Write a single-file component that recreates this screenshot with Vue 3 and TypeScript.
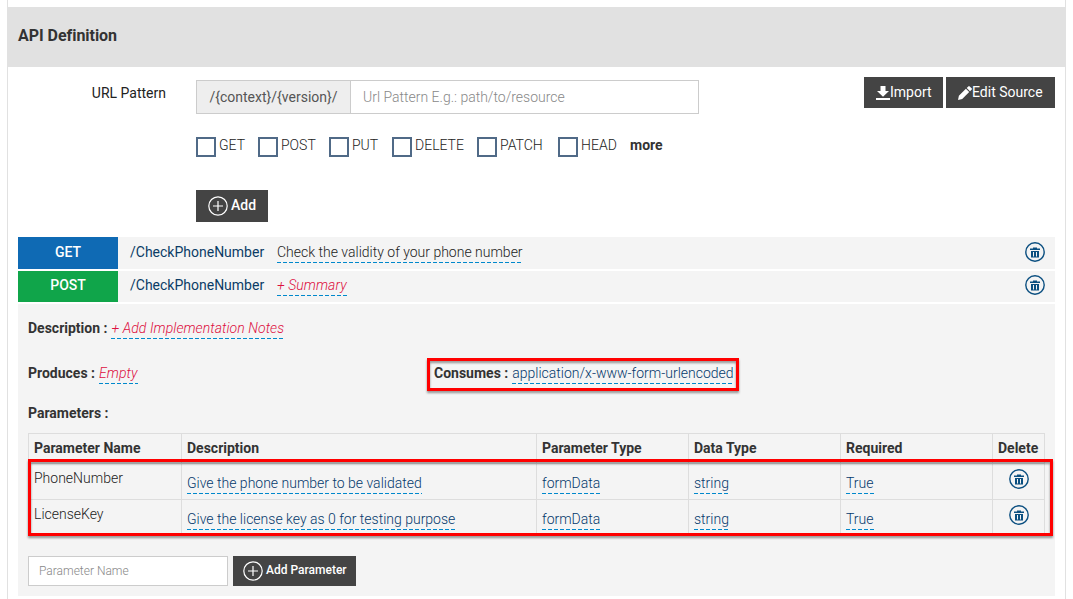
<script setup lang="ts">
const methods = ['GET', 'POST', 'PUT', 'DELETE', 'PATCH', 'HEAD']

interface Resource {
  verb: string
  path: string
  summary: string
  empty: boolean
}
const resources: Resource[] = [
  { verb: 'GET', path: '/CheckPhoneNumber', summary: 'Check the validity of your phone number', empty: false },
  { verb: 'POST', path: '/CheckPhoneNumber', summary: '+ Summary', empty: true },
]

const headings = ['Parameter Name', 'Description', 'Parameter Type', 'Data Type', 'Required', 'Delete']

interface Param {
  name: string
  values: string[]
}
const params: Param[] = [
  { name: 'PhoneNumber', values: ['Give the phone number to be validated', 'formData', 'string', 'True'] },
  { name: 'LicenseKey', values: ['Give the license key as 0 for testing purpose', 'formData', 'string', 'True'] },
]
</script>

<template>
  <main class="page">
    <section class="panel">
      <header class="panel-head">API Definition</header>

      <div class="form">
        <label class="form-label">URL Pattern</label>
        <div class="form-main">
          <div class="url-group">
            <span class="prefix">/{context}/{version}/</span>
            <input class="url-input" type="text" placeholder="Url Pattern E.g.: path/to/resource" />
          </div>
          <div class="methods">
            <label v-for="m in methods" :key="m" class="method"><span class="box"></span><span>{{ m }}</span></label>
            <b class="more">more</b>
          </div>
          <button class="btn add-btn">
            <svg class="plus" viewBox="0 0 20 20"><circle cx="10" cy="10" r="9.2" /><path d="M10 5v10M5 10h10" /></svg>
            <span>Add</span>
          </button>
        </div>
        <div class="actions">
          <button class="btn import">
            <svg class="dl" viewBox="0 0 14 14"><path d="M4.500 0h5v5h3.500L7 10.800 1 5h3.500zM0 12h14v2H0z" /></svg>
            <span>Import</span>
          </button>
          <button class="btn edit">
            <svg class="pen" viewBox="0 0 14 14"><path d="M0 14l.9-4.200L7.900 2.800l3.300 3.300-7 7zM8.700 2L10.300.4q.7-.7 1.400 0l1.900 1.900q.7.7 0 1.400L12 5.300z" /></svg>
            <span>Edit Source</span>
          </button>
        </div>
      </div>

      <div class="resources">
        <div v-for="r in resources" :key="r.verb" class="resource" :class="r.verb.toLowerCase()">
          <span class="verb">{{ r.verb }}</span>
          <span class="path">{{ r.path }}</span>
          <span class="editable summary" :class="{ empty: r.empty }">{{ r.summary }}</span>
          <svg class="trash" viewBox="0 0 20 20"><circle cx="10" cy="10" r="9.200" /><path d="M8 5.500h4v1h3v1.500H5V6.500h3zM6 9h8v6.500H6z" /><path class="slots" d="M8.500 10v4.500M11.500 10v4.500" /></svg>
        </div>
      </div>

      <div class="details">
        <div class="line description"><b>Description :</b><span class="editable empty">+ Add Implementation Notes</span></div>
        <div class="media">
          <div class="line produces"><b>Produces :</b><span class="editable empty">Empty</span></div>
          <div class="line consumes"><b>Consumes :</b><span class="editable">application/x-www-form-urlencoded</span></div>
        </div>
        <div class="line params-title"><b>Parameters :</b></div>

        <div class="table-wrap">
          <table>
            <colgroup><col class="c1" /><col class="c2" /><col class="c3" /><col class="c3" /><col class="c3" /><col class="c4" /></colgroup>
            <thead>
              <tr><th v-for="h in headings" :key="h">{{ h }}</th></tr>
            </thead>
            <tbody>
              <tr v-for="p in params" :key="p.name">
                <td class="name">{{ p.name }}</td>
                <td v-for="(v, i) in p.values" :key="i" class="val"><span class="editable">{{ v }}</span></td>
                <td class="del">
                  <svg class="trash" viewBox="0 0 20 20"><circle cx="10" cy="10" r="9.200" /><path d="M8 5.500h4v1h3v1.500H5V6.500h3zM6 9h8v6.500H6z" /><path class="slots" d="M8.500 10v4.500M11.500 10v4.500" /></svg>
                </td>
              </tr>
            </tbody>
          </table>
          <div class="mark rows-mark"></div>
        </div>

        <div class="add-param">
          <input class="param-input" type="text" placeholder="Parameter Name" />
          <button class="btn param-btn">
            <svg class="plus" viewBox="0 0 20 20"><circle cx="10" cy="10" r="9.2" /><path d="M10 5v10M5 10h10" /></svg>
            <span>Add Parameter</span>
          </button>
        </div>
      </div>
    </section>
  </main>
</template>

<style>
body {
  margin: 0;
  background: #fff;
  overflow: hidden;
}
</style>

<style scoped>
*,
.consumes::after {
  box-sizing: border-box;
}
.page {
  height: 599px;
  padding: 0 7px;
  font: 300 14px/20px Roboto, "Liberation Sans", sans-serif;
  color: #222;
  overflow: hidden;
}
.panel {
  width: 1059px;
  height: 599px;
  padding-top: 7px;
  border: solid #e1e1e1;
  border-width: 0 1px;
}
.panel-head {
  height: 60px;
  padding: 19px 10px 0;
  background: #e1e1e1;
  color: #333;
  font-size: 16px;
  font-weight: 700;
  letter-spacing: -0.04px;
}
.form {
  display: flex;
  height: 170px;
  padding-right: 10px;
}
.form-label {
  width: 158px;
  padding-top: 16px;
  text-align: right;
  font-weight: 400;
}
.form-main {
  width: 503px;
  margin-left: 30px;
  padding-top: 13px;
}
.url-group {
  display: flex;
  height: 34px;
  border: 1px solid #ccc;
}
.prefix {
  width: 154px;
  flex: none;
  border-right: 1px solid #ccc;
  background: #eee;
  line-height: 32px;
  text-align: center;
  font-weight: 400;
  color: #555;
}
input {
  font: inherit;
  border: 0;
  outline: 0;
  background: #fff;
  padding: 0 12px;
  border-radius: 0;
}
.url-input {
  flex: 1;
  min-width: 0;
}
input::placeholder {
  color: #888;
  opacity: 1;
}
.methods {
  display: grid;
  grid-template-columns: 62px 71px 63px 85px 81px 72px auto;
  margin-top: 21px;
  height: 22px;
}
.method {
  display: flex;
  gap: 3px;
}
.box {
  width: 20px;
  height: 20px;
  margin-top: 2px;
  border: 2px solid #506a87;
  background: #fff;
}
b {
  font-weight: 700;
  color: #333;
}
.btn {
  display: flex;
  align-items: center;
  border: 0;
  padding: 0;
  background: #444;
  color: #fff;
  font: 400 14px/20px Roboto, "Liberation Sans", sans-serif;
  white-space: nowrap;
}
.btn span {
  margin-top: -1px;
}
.add-btn {
  width: 72px;
  height: 32px;
  margin-top: 33px;
  padding: 0 0 1px 12px;
  gap: 3px;
  font-weight: 500;
}
.plus {
  width: 20px;
  height: 20px;
  flex: none;
  margin-top: 1px;
  fill: none;
  stroke: #fff;
  stroke-width: 1.2;
}
.actions {
  display: flex;
  gap: 3px;
  margin-left: auto;
  padding-top: 10px;
}
.actions .btn {
  height: 31px;
  padding-left: 12px;
}
.actions .btn.import {
  width: 79px;
}
.actions .btn.edit {
  width: 109px;
}
.actions svg {
  width: 14px;
  height: 14px;
  fill: #fff;
  margin-top: 1px;
}
.resources {
  display: grid;
  grid-template-rows: 32px 31px;
  gap: 2px;
  padding: 0 10px;
}
.resource {
  display: flex;
  background: #f4f4f4;
  line-height: 30px;
}
.verb {
  width: 100px;
  background: #0f6ab4;
  color: #fff;
  font-weight: 500;
  text-align: center;
}
.post .verb {
  background: #10a54a;
}
.post {
  line-height: 28px;
}
.path {
  width: 147px;
  margin-left: 12px;
  font-weight: 400;
  color: #0b3c66;
}
.editable {
  color: #04396c;
  height: 21px;
  line-height: 20px;
  background: repeating-linear-gradient(90deg, #0088cc 0 4px, transparent 4px 6px) 0 100% / 100% 1px no-repeat;
}
.editable.empty {
  color: #dd0f40;
  font-style: italic;
  letter-spacing: 0.07px;
}
.resource .editable {
  margin-top: 5px;
}
.post .editable {
  margin-top: 4px;
}
.get .editable {
  color: #222;
}
.trash {
  width: 20px;
  height: 20px;
  fill: #0b4f80;
}
.trash circle {
  fill: none;
  stroke: #0b4f80;
  stroke-width: 1.400;
}
.slots {
  stroke: #f4f4f4;
  stroke-width: 1;
}
.resource .trash {
  margin: 5px 10px 0 auto;
}
.resource.post .trash {
  margin-top: 4px;
}
.details {
  height: 292px;
  margin: 2px 10px 0;
  padding: 14px 10px 0;
  background: #f4f4f4;
}
.line {
  display: flex;
  gap: 4px;
  height: 22px;
}
.media {
  display: flex;
  margin-top: 23px;
}
.produces {
  width: 406px;
}
.consumes {
  position: relative;
}
.consumes::after {
  content: '';
  position: absolute;
  left: -7px;
  top: -5px;
  width: 312px;
  height: 33px;
  border: 3px solid #f00;
  filter: drop-shadow(0 2px 1px rgba(0, 0, 0, 0.4));
}
.params-title {
  margin-top: 18px;
}
.table-wrap {
  position: relative;
  margin-top: 8px;
}
table {
  width: 1017px;
  table-layout: fixed;
  border-collapse: collapse;
}
.c1 { width: 153px; }
.c2 { width: 355px; }
.c3 { width: 152px; }
.c4 { width: 52px; }
th,
td {
  padding: 0 5px;
  border: 1px solid #ddd;
  text-align: left;
  vertical-align: top;
  white-space: nowrap;
}
th {
  height: 30px;
  padding-top: 4px;
  color: #333;
  font-weight: 700;
}
td {
  height: 36px;
}
.name {
  padding-top: 4px;
}
.val {
  padding-top: 9px;
}
.val .editable {
  display: inline-block;
}
.del {
  padding: 5px 0 0 16px;
}
.del .trash {
  display: block;
}
.rows-mark {
  position: absolute;
  left: 0;
  top: 26px;
  width: 1025px;
  height: 77px;
  border: 3px solid #f00;
  filter: drop-shadow(0 2px 1px rgba(0, 0, 0, 0.4));
}
.add-param {
  display: flex;
  gap: 5px;
  margin-top: 20px;
}
.param-input {
  width: 200px;
  height: 30px;
  padding: 0 10px 1px;
  border: 1px solid #ccc;
  font-size: 12px;
}
.param-btn {
  width: 123px;
  height: 30px;
  padding: 0 0 1px 10px;
  gap: 3px;
  font-size: 12px;
  font-weight: 500;
}
</style>
